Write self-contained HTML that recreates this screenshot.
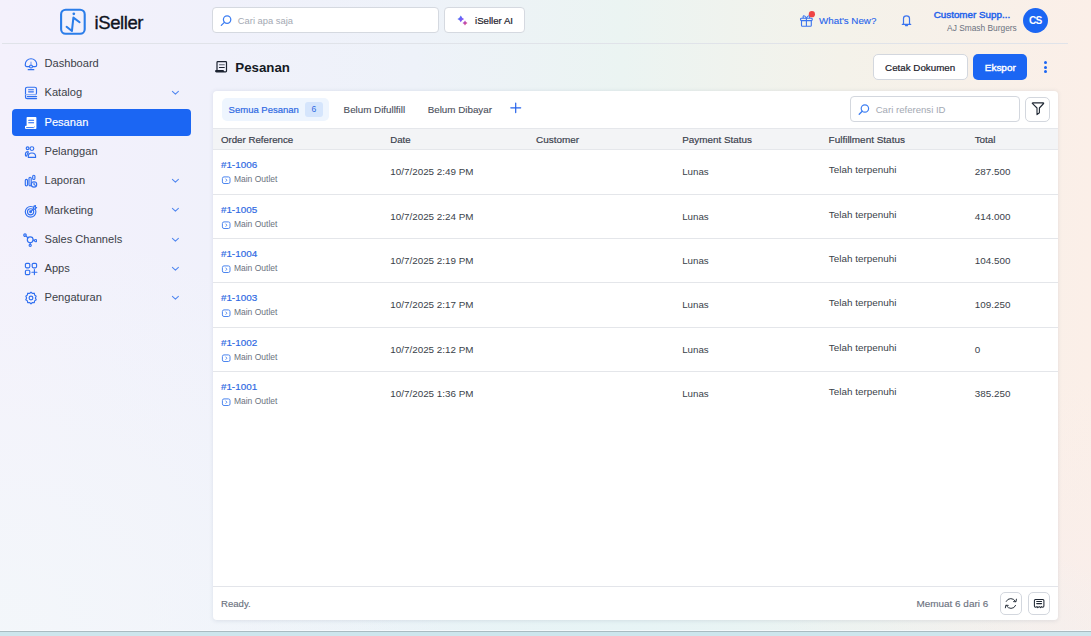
<!DOCTYPE html>
<html><head><meta charset="utf-8">
<style>
*{box-sizing:border-box;margin:0;padding:0}
html,body{width:1091px;height:636px;overflow:hidden}
body{font-family:"Liberation Sans",sans-serif;position:relative;
background:
radial-gradient(ellipse 460px 420px at 0px 636px, rgba(243,247,250,0.95) 0%, rgba(243,247,250,0.5) 50%, rgba(243,247,250,0) 100%),
radial-gradient(ellipse 520px 140px at 640px 636px, rgba(230,244,246,0.9) 0%, rgba(230,244,246,0) 100%),
radial-gradient(ellipse 320px 260px at 1091px 636px, rgba(249,238,235,0.9) 0%, rgba(249,238,235,0) 100%),
linear-gradient(90deg,#f4f1fc 0%,#f0f1fb 20%,#eef2f9 38%,#ebf4f2 57%,#f4f2ea 77%,#fbefe8 100%);}
.abs{position:absolute}
.t{position:absolute;white-space:nowrap}
</style></head><body>
<div class="abs" style="left:2px;top:43px;width:1066px;height:1px;background:#e0e3e9"></div>
<div class="abs" style="left:0;top:630px;width:1091px;height:1px;background:rgba(250,252,255,0.7)"></div>
<div class="abs" style="left:0;top:631px;width:1091px;height:1px;background:#a9bbc1"></div>
<div class="abs" style="left:0;top:632px;width:1091px;height:4px;background:#cde6ed"></div>
<svg class="abs" style="left:58px;top:7px" width="30" height="30" viewBox="58 7 30 30">
<rect x="61.1" y="9.7" width="23.6" height="24.1" rx="4.6" fill="none" stroke="#2b7de9" stroke-width="2.1"/>
<circle cx="73.8" cy="13.8" r="1.35" fill="#2b7de9"/>
<path d="M66.6 26.8 L71.9 31 L73.4 17.6 L79.6 22.2" fill="none" stroke="#2b7de9" stroke-width="2.05" stroke-linejoin="round" stroke-linecap="round"/>
</svg>
<div class="t" style="left:94.5px;top:14.16px;font-size:18.5px;line-height:18.5px;color:#10131f;font-weight:400;letter-spacing:-0.4px;-webkit-text-stroke:0.35px #10131f">iSeller</div>
<div class="abs" style="left:212px;top:7px;width:227px;height:26px;background:#fff;border:1px solid #d5d9e0;border-radius:4px"></div>
<svg class="abs" style="left:218px;top:13px" width="16" height="16" viewBox="218 13 16 16">
<circle cx="227.1" cy="19.6" r="3.7" fill="none" stroke="#3d7ef2" stroke-width="1.25"/>
<path d="M224.4 22.4 L221.3 25.4" stroke="#3d7ef2" stroke-width="1.3" stroke-linecap="round"/></svg>
<div class="t" style="left:237.8px;top:16.00px;font-size:9.4px;line-height:9.4px;color:#a4a9b3;font-weight:400;">Cari apa saja</div>
<div class="abs" style="left:444px;top:7px;width:81px;height:26px;background:#fff;border:1px solid #d5d9e0;border-radius:4px"></div>
<svg class="abs" style="left:454px;top:13px" width="14" height="13" viewBox="454 13 14 13">
<defs><linearGradient id="g1" gradientUnits="userSpaceOnUse" x1="457" y1="16" x2="467.5" y2="25"><stop offset="0" stop-color="#2d7ff6"/><stop offset="0.5" stop-color="#8a55f5"/><stop offset="1" stop-color="#f0466a"/></linearGradient></defs>
<path d="M460.8 15.50 Q461.75 17.95 464.20 18.9 Q461.75 19.85 460.8 22.30 Q459.85 19.85 457.40 18.9 Q459.85 17.95 460.8 15.50Z" fill="url(#g1)"/>
<path d="M465 20.40 Q465.70 22.20 467.50 22.9 Q465.70 23.60 465 25.40 Q464.30 23.60 462.50 22.9 Q464.30 22.20 465 20.40Z" fill="url(#g1)"/>
</svg>
<div class="t" style="left:475px;top:15.73px;font-size:9.65px;line-height:9.65px;color:#1d212b;font-weight:400;-webkit-text-stroke:0.2px #1d212b">iSeller AI</div>
<svg class="abs" style="left:798px;top:10px" width="18" height="18" viewBox="798 10 18 18">
<rect x="800.6" y="18.2" width="11.6" height="2.4" rx="0.8" fill="none" stroke="#3b74ee" stroke-width="1.1"/>
<path d="M801.5 20.6 V25.4 Q801.5 26.3 802.4 26.3 H810.4 Q811.3 26.3 811.3 25.4 V20.6 M806.4 18.2 V26.3" fill="none" stroke="#3b74ee" stroke-width="1.1"/>
<path d="M806.4 18.2 C804.6 14.6 802.4 15.2 803.3 18.2 M806.4 18.2 C808.2 14.6 810.4 15.2 809.5 18.2" fill="none" stroke="#3b74ee" stroke-width="1.1"/>
<circle cx="811.9" cy="14.2" r="3.1" fill="#ef4444"/>
</svg>
<div class="t" style="left:819.1px;top:16.06px;font-size:9.78px;line-height:9.78px;color:#2563eb;font-weight:400;-webkit-text-stroke:0.12px #2563eb">What's New?</div>
<svg class="abs" style="left:900px;top:13px" width="14" height="15" viewBox="900 13 14 15">
<path d="M903.5 24 V18.5 Q903.5 15.8 906.5 15.8 Q909.5 15.8 909.5 18.5 V24" fill="none" stroke="#3b74ee" stroke-width="1.2"/>
<path d="M902.3 24.3 H910.7" stroke="#3b74ee" stroke-width="1.3" stroke-linecap="round"/>
<path d="M905.4 25.6 H907.6" stroke="#3b74ee" stroke-width="1.1" stroke-linecap="round"/>
</svg>
<div class="t" style="left:933.7px;top:9.63px;font-size:9.84px;line-height:9.84px;color:#2563eb;font-weight:400;-webkit-text-stroke:0.45px #2563eb">Customer Supp...</div>
<div class="t" style="left:947.1px;top:23.67px;font-size:8.37px;line-height:8.37px;color:#6b7280;font-weight:400;">AJ Smash Burgers</div>
<div class="abs" style="left:1023px;top:8px;width:25px;height:25px;border-radius:50%;background:#1b66f3"></div>
<div class="t" style="left:1028.9px;top:16.25px;font-size:10.2px;line-height:10.2px;color:#fff;font-weight:700;letter-spacing:-0.8px">CS</div>
<div class="abs" style="left:12px;top:109px;width:179px;height:27px;border-radius:4px;background:#1b66f3"></div>
<div class="t" style="left:44.5px;top:58.29px;font-size:11.1px;line-height:11.1px;color:#3b3f48;font-weight:400;">Dashboard</div>
<div class="t" style="left:44.5px;top:86.89px;font-size:11.1px;line-height:11.1px;color:#3b3f48;font-weight:400;">Katalog</div>
<div class="t" style="left:44.5px;top:116.59px;font-size:11.1px;line-height:11.1px;color:#fff;font-weight:400;-webkit-text-stroke:0.15px #fff">Pesanan</div>
<div class="t" style="left:44.5px;top:146.49px;font-size:11.1px;line-height:11.1px;color:#3b3f48;font-weight:400;">Pelanggan</div>
<div class="t" style="left:44.5px;top:175.49px;font-size:11.1px;line-height:11.1px;color:#3b3f48;font-weight:400;">Laporan</div>
<div class="t" style="left:44.5px;top:205.29px;font-size:11.1px;line-height:11.1px;color:#3b3f48;font-weight:400;">Marketing</div>
<div class="t" style="left:44.5px;top:233.69px;font-size:11.1px;line-height:11.1px;color:#3b3f48;font-weight:400;">Sales Channels</div>
<div class="t" style="left:44.5px;top:263.49px;font-size:11.1px;line-height:11.1px;color:#3b3f48;font-weight:400;">Apps</div>
<div class="t" style="left:44.5px;top:292.29px;font-size:11.1px;line-height:11.1px;color:#3b3f48;font-weight:400;">Pengaturan</div>
<svg class="abs" style="left:170px;top:89.2px" width="11" height="8" viewBox="0 0 11 8"><path d="M2.4 2.3 L5.4 5.2 L8.4 2.3" fill="none" stroke="#4f86f0" stroke-width="1.05" stroke-linecap="round" stroke-linejoin="round"/></svg>
<svg class="abs" style="left:170px;top:177.0px" width="11" height="8" viewBox="0 0 11 8"><path d="M2.4 2.3 L5.4 5.2 L8.4 2.3" fill="none" stroke="#4f86f0" stroke-width="1.05" stroke-linecap="round" stroke-linejoin="round"/></svg>
<svg class="abs" style="left:170px;top:206.2px" width="11" height="8" viewBox="0 0 11 8"><path d="M2.4 2.3 L5.4 5.2 L8.4 2.3" fill="none" stroke="#4f86f0" stroke-width="1.05" stroke-linecap="round" stroke-linejoin="round"/></svg>
<svg class="abs" style="left:170px;top:235.8px" width="11" height="8" viewBox="0 0 11 8"><path d="M2.4 2.3 L5.4 5.2 L8.4 2.3" fill="none" stroke="#4f86f0" stroke-width="1.05" stroke-linecap="round" stroke-linejoin="round"/></svg>
<svg class="abs" style="left:170px;top:265.0px" width="11" height="8" viewBox="0 0 11 8"><path d="M2.4 2.3 L5.4 5.2 L8.4 2.3" fill="none" stroke="#4f86f0" stroke-width="1.05" stroke-linecap="round" stroke-linejoin="round"/></svg>
<svg class="abs" style="left:170px;top:293.8px" width="11" height="8" viewBox="0 0 11 8"><path d="M2.4 2.3 L5.4 5.2 L8.4 2.3" fill="none" stroke="#4f86f0" stroke-width="1.05" stroke-linecap="round" stroke-linejoin="round"/></svg>
<svg class="abs" style="left:24px;top:56.5px" width="14" height="14" viewBox="0 0 14 14" fill="none" stroke="#2f6ff0" stroke-width="1.15" stroke-linecap="round" stroke-linejoin="round"><path d="M5.4 9.6 H2.9 Q1.3 9.6 1.3 8 V7.2 A5.7 5.5 0 0 1 12.7 7.2 V8 Q12.7 9.6 11.1 9.6 H8.6"/><circle cx="7" cy="9.5" r="1.45"/><path d="M7 5 V7.8" stroke="#7ea3f4"/><path d="M4.2 12.7 H9.8" stroke-width="1.2"/></svg>
<svg class="abs" style="left:24px;top:86px" width="14" height="14" viewBox="0 0 14 14" fill="none" stroke="#2f6ff0" stroke-width="1.15" stroke-linecap="round" stroke-linejoin="round"><path d="M1.5 11 V3 Q1.5 1.2 3.3 1.2 H10.7 Q12.5 1.2 12.5 3 V7 Q12.5 8.2 11.5 8.6"/><path d="M1.5 11 Q1.5 12.6 3.1 12.6 H12.6"/><path d="M1.7 8.6 H11.6" stroke="#8fb0f5"/><path d="M3.3 10.6 H12.6"/><path d="M4.6 3.7 H9.4 M4.6 5.8 H9.4"/></svg>
<svg class="abs" style="left:24px;top:116px" width="14" height="14" viewBox="0 0 14 14"><path d="M2.6 1.8 Q2.6 1 3.4 1 H11.6 Q12.4 1 12.4 1.8 V12.2 Q12.4 13 11.6 13 H2.3 Q1 13 1 11.7 V10.6 Q1 9.7 1.9 9.7 H2.6 Z" fill="#fff"/><path d="M4.7 4.3 H9.6 M4.7 6.7 H9.6" stroke="#1b66f3" stroke-width="1.1" stroke-linecap="round"/><path d="M2.2 11.6 H9.6 L10.6 10.8" stroke="#1b66f3" stroke-width="0.9" fill="none"/></svg>
<svg class="abs" style="left:24px;top:144.9px" width="14" height="14" viewBox="0 0 14 14" fill="none" stroke="#2f6ff0" stroke-width="1.15" stroke-linecap="round" stroke-linejoin="round"><circle cx="3.6" cy="3.2" r="1.4"/><circle cx="7.9" cy="3.6" r="1.9"/><path d="M4.3 12.4 Q3.8 8 7.9 8 Q12 8 11.6 12.4 Z"/><path d="M4.2 6.6 Q1.2 6.6 1.4 10 Q1.6 11.8 2.7 10.8 Q3.3 8.6 4.4 7.8"/></svg>
<svg class="abs" style="left:24px;top:174px" width="14" height="14" viewBox="0 0 14 14" fill="none" stroke="#2f6ff0" stroke-width="1.15" stroke-linecap="round" stroke-linejoin="round"><rect x="1.3" y="5.3" width="2.2" height="6.6" rx="1.1"/><rect x="5" y="3.2" width="2.2" height="8.7" rx="1.1"/><rect x="8.7" y="1.2" width="2.2" height="4.3" rx="1.1"/><circle cx="10" cy="10.4" r="2.7" fill="#f0f1fb"/><path d="M10 8.8 V10.4 L11.3 11.4"/></svg>
<svg class="abs" style="left:24px;top:203.5px" width="14" height="14" viewBox="0 0 14 14" fill="none" stroke="#2f6ff0" stroke-width="1.15" stroke-linecap="round" stroke-linejoin="round"><circle cx="6.6" cy="7.8" r="5.3"/><circle cx="6.6" cy="7.8" r="3.1"/><path d="M6.6 7.8 L10.2 4.2"/><circle cx="6.6" cy="7.8" r="0.9" fill="#2f6ff0"/><path d="M10 2.1 L11.5 1.6 L11.3 3.2 L12.6 3.6 L10.6 5.2 L9.3 4.7 Z" fill="#f0f1fb"/></svg>
<svg class="abs" style="left:23px;top:233px" width="14" height="14" viewBox="0 0 14 14" fill="none" stroke="#2f6ff0" stroke-width="1.15" stroke-linecap="round" stroke-linejoin="round"><circle cx="7.2" cy="6.8" r="2.9"/><circle cx="2" cy="2.1" r="1.25"/><circle cx="12.6" cy="7.6" r="1.1"/><circle cx="7.2" cy="12.3" r="1.1"/><path d="M2.9 3 L5 4.9 M10.1 7.1 L11.5 7.4 M7.2 9.7 V11.2"/></svg>
<svg class="abs" style="left:24px;top:262px" width="14" height="14" viewBox="0 0 14 14" fill="none" stroke="#2f6ff0" stroke-width="1.15" stroke-linecap="round" stroke-linejoin="round"><rect x="1.4" y="1.4" width="4.4" height="4.4" rx="1.2"/><rect x="8.2" y="1.4" width="4.4" height="4.4" rx="1.2"/><rect x="1.4" y="8.2" width="4.4" height="4.4" rx="1.2"/><path d="M10.4 7.6 V12.6 M7.9 10.2 H12.9"/></svg>
<svg class="abs" style="left:24px;top:290.8px" width="14" height="14" viewBox="0 0 14 14" fill="none" stroke="#2f6ff0" stroke-width="1.15" stroke-linecap="round" stroke-linejoin="round"><path d="M7 1.2 L8.4 2.4 L10.3 2.2 L10.6 4 L12.2 5.1 L11.4 6.9 L12.2 8.7 L10.6 9.9 L10.3 11.7 L8.4 11.5 L7 12.8 L5.6 11.5 L3.7 11.7 L3.4 9.9 L1.8 8.7 L2.6 6.9 L1.8 5.1 L3.4 4 L3.7 2.2 L5.6 2.4 Z"/><circle cx="7" cy="7" r="1.9"/></svg>
<svg class="abs" style="left:208px;top:56px" width="24" height="22" viewBox="208 56 24 22"><path d="M217 70.6 V62.4 Q217 61.6 217.8 61.6 H225.7 Q226.5 61.6 226.5 62.4 V71 Q226.5 71.8 225.7 71.8 H216.4 Q215.6 71.8 215.6 71.1 Q215.6 70.5 216.3 70.5 H222.9 L223.9 71.6" fill="none" stroke="#1b2230" stroke-width="1.2" stroke-linejoin="round"/><path d="M216 71.2 H223" stroke="#1b2230" stroke-width="1.5"/><path d="M219.4 64.8 H224.3" stroke="#5b6270" stroke-width="1.05" stroke-linecap="round"/><path d="M219.4 67.4 H224.3" stroke="#1b2230" stroke-width="1.05" stroke-linecap="round"/></svg>
<div class="t" style="left:235.3px;top:60.58px;font-size:13.3px;line-height:13.3px;color:#151a24;font-weight:700;">Pesanan</div>
<div class="abs" style="left:873px;top:54px;width:95px;height:26px;background:#fff;border:1px solid #d3d7de;border-radius:5px"></div>
<div class="t" style="left:885.1px;top:62.76px;font-size:9.79px;line-height:9.79px;color:#1d212b;font-weight:400;-webkit-text-stroke:0.2px #1d212b">Cetak Dokumen</div>
<div class="abs" style="left:973px;top:54px;width:54px;height:26px;background:#1b66f3;border-radius:5px"></div>
<div class="t" style="left:984.8px;top:63.28px;font-size:9.95px;line-height:9.95px;color:#fff;font-weight:400;-webkit-text-stroke:0.4px #fff">Ekspor</div>
<div class="abs" style="left:1043.5px;top:61.0px;width:3px;height:3px;border-radius:50%;background:#1b66f3"></div>
<div class="abs" style="left:1043.5px;top:65.5px;width:3px;height:3px;border-radius:50%;background:#1b66f3"></div>
<div class="abs" style="left:1043.5px;top:70.0px;width:3px;height:3px;border-radius:50%;background:#1b66f3"></div>
<div class="abs" style="left:213px;top:91px;width:845px;height:529px;background:#fff;border-radius:4px;box-shadow:0 0.5px 4px rgba(60,70,110,0.12)"></div>
<div class="abs" style="left:222px;top:98px;width:107px;height:23px;background:#eef5fe;border-radius:5px"></div>
<div class="abs" style="left:305px;top:102px;width:18px;height:15px;background:#d5e5fc;border-radius:3px"></div>
<div class="t" style="left:228.6px;top:104.80px;font-size:9.5px;line-height:9.5px;color:#2f6ae3;font-weight:400;-webkit-text-stroke:0.2px #2f6ae3">Semua Pesanan</div>
<div class="t" style="left:311.6px;top:104.96px;font-size:8.6px;line-height:8.6px;color:#2f6ae3;font-weight:400;">6</div>
<div class="t" style="left:343.6px;top:104.75px;font-size:9.8px;line-height:9.8px;color:#4b505b;font-weight:400;-webkit-text-stroke:0.12px #4b505b">Belum Difullfill</div>
<div class="t" style="left:427.7px;top:104.75px;font-size:9.8px;line-height:9.8px;color:#4b505b;font-weight:400;-webkit-text-stroke:0.12px #4b505b">Belum Dibayar</div>
<svg class="abs" style="left:509px;top:101px" width="13" height="13" viewBox="509 101 13 13"><path d="M515.7 103 V112.6 M510.8 107.8 H520.7" stroke="#2563eb" stroke-width="1.2" stroke-linecap="round"/></svg>
<div class="abs" style="left:850px;top:96px;width:170px;height:26px;background:#fff;border:1px solid #d3d7de;border-radius:4px"></div>
<svg class="abs" style="left:857px;top:102px" width="14" height="14" viewBox="857 102 14 14">
<circle cx="864.9" cy="108.5" r="3.7" fill="none" stroke="#3d7ef2" stroke-width="1.2"/>
<path d="M862.2 111.3 L859.2 114.3" stroke="#3d7ef2" stroke-width="1.3" stroke-linecap="round"/></svg>
<div class="t" style="left:875.7px;top:104.55px;font-size:9.6px;line-height:9.6px;color:#a4a9b3;font-weight:400;">Cari referensi ID</div>
<div class="abs" style="left:1025px;top:97px;width:25px;height:25px;background:#fff;border:1px solid #d3d7de;border-radius:5px"></div>
<svg class="abs" style="left:1030px;top:101px" width="16" height="16" viewBox="1030 101 16 16"><path d="M1032.3 103.4 Q1032 102.9 1032.8 102.9 H1043.2 Q1044 102.9 1043.6 103.5 L1039.4 108 V112.8 L1037 114.6 V108 Z" fill="none" stroke="#1f2733" stroke-width="1.1" stroke-linejoin="round"/></svg>
<div class="abs" style="left:213px;top:128px;width:845px;height:22px;background:#f3f4f6;border-top:1px solid #e5e7eb;border-bottom:1px solid #e5e7eb"></div>
<div class="t" style="left:220.9px;top:134.99px;font-size:9.72px;line-height:9.72px;color:#3a404c;font-weight:400;-webkit-text-stroke:0.18px #3a404c">Order Reference</div>
<div class="t" style="left:390.3px;top:135.05px;font-size:9.6px;line-height:9.6px;color:#3a404c;font-weight:400;-webkit-text-stroke:0.18px #3a404c">Date</div>
<div class="t" style="left:536px;top:134.88px;font-size:9.95px;line-height:9.95px;color:#3a404c;font-weight:400;-webkit-text-stroke:0.18px #3a404c">Customer</div>
<div class="t" style="left:682.2px;top:134.90px;font-size:9.9px;line-height:9.9px;color:#3a404c;font-weight:400;-webkit-text-stroke:0.18px #3a404c">Payment Status</div>
<div class="t" style="left:828.6px;top:134.87px;font-size:9.96px;line-height:9.96px;color:#3a404c;font-weight:400;-webkit-text-stroke:0.18px #3a404c">Fulfillment Status</div>
<div class="t" style="left:974.7px;top:134.90px;font-size:9.9px;line-height:9.9px;color:#3a404c;font-weight:400;-webkit-text-stroke:0.18px #3a404c">Total</div>
<div class="abs" style="left:213px;top:194px;width:845px;height:1px;background:#e4e6ea"></div>
<div class="abs" style="left:213px;top:238px;width:845px;height:1px;background:#e4e6ea"></div>
<div class="abs" style="left:213px;top:282px;width:845px;height:1px;background:#e4e6ea"></div>
<div class="abs" style="left:213px;top:327px;width:845px;height:1px;background:#e4e6ea"></div>
<div class="abs" style="left:213px;top:371px;width:845px;height:1px;background:#e4e6ea"></div>
<div class="t" style="left:220.9px;top:159.60px;font-size:9.9px;line-height:9.9px;color:#2f6ae3;font-weight:400;-webkit-text-stroke:0.2px #2f6ae3">#1-1006</div>
<svg class="abs" style="left:221px;top:175.60px" width="11" height="9" viewBox="0 0 11 9"><rect x="1.4" y="0.9" width="7.6" height="6.6" rx="1.6" fill="none" stroke="#4d86ef" stroke-width="1"/><path d="M4.6 2.7 L5.9 4.2 L4.6 5.7" fill="none" stroke="#4d86ef" stroke-width="0.9"/></svg>
<div class="t" style="left:233.9px;top:175.31px;font-size:8.5px;line-height:8.5px;color:#6b7280;font-weight:400;">Main Outlet</div>
<div class="t" style="left:390.3px;top:166.62px;font-size:9.86px;line-height:9.86px;color:#3a3f4a;font-weight:400;">10/7/2025 2:49 PM</div>
<div class="t" style="left:682.2px;top:166.63px;font-size:9.74px;line-height:9.74px;color:#3a3f4a;font-weight:400;">Lunas</div>
<div class="t" style="left:828.8px;top:165.40px;font-size:9.9px;line-height:9.9px;color:#3a3f4a;font-weight:400;">Telah terpenuhi</div>
<div class="t" style="left:974.8px;top:167.02px;font-size:9.86px;line-height:9.86px;color:#3a3f4a;font-weight:400;">287.500</div>
<div class="t" style="left:220.9px;top:204.60px;font-size:9.9px;line-height:9.9px;color:#2f6ae3;font-weight:400;-webkit-text-stroke:0.2px #2f6ae3">#1-1005</div>
<svg class="abs" style="left:221px;top:220.60px" width="11" height="9" viewBox="0 0 11 9"><rect x="1.4" y="0.9" width="7.6" height="6.6" rx="1.6" fill="none" stroke="#4d86ef" stroke-width="1"/><path d="M4.6 2.7 L5.9 4.2 L4.6 5.7" fill="none" stroke="#4d86ef" stroke-width="0.9"/></svg>
<div class="t" style="left:233.9px;top:220.31px;font-size:8.5px;line-height:8.5px;color:#6b7280;font-weight:400;">Main Outlet</div>
<div class="t" style="left:390.3px;top:211.62px;font-size:9.86px;line-height:9.86px;color:#3a3f4a;font-weight:400;">10/7/2025 2:24 PM</div>
<div class="t" style="left:682.2px;top:211.63px;font-size:9.74px;line-height:9.74px;color:#3a3f4a;font-weight:400;">Lunas</div>
<div class="t" style="left:828.8px;top:210.40px;font-size:9.9px;line-height:9.9px;color:#3a3f4a;font-weight:400;">Telah terpenuhi</div>
<div class="t" style="left:974.8px;top:212.02px;font-size:9.86px;line-height:9.86px;color:#3a3f4a;font-weight:400;">414.000</div>
<div class="t" style="left:220.9px;top:248.60px;font-size:9.9px;line-height:9.9px;color:#2f6ae3;font-weight:400;-webkit-text-stroke:0.2px #2f6ae3">#1-1004</div>
<svg class="abs" style="left:221px;top:264.60px" width="11" height="9" viewBox="0 0 11 9"><rect x="1.4" y="0.9" width="7.6" height="6.6" rx="1.6" fill="none" stroke="#4d86ef" stroke-width="1"/><path d="M4.6 2.7 L5.9 4.2 L4.6 5.7" fill="none" stroke="#4d86ef" stroke-width="0.9"/></svg>
<div class="t" style="left:233.9px;top:264.31px;font-size:8.5px;line-height:8.5px;color:#6b7280;font-weight:400;">Main Outlet</div>
<div class="t" style="left:390.3px;top:255.62px;font-size:9.86px;line-height:9.86px;color:#3a3f4a;font-weight:400;">10/7/2025 2:19 PM</div>
<div class="t" style="left:682.2px;top:255.63px;font-size:9.74px;line-height:9.74px;color:#3a3f4a;font-weight:400;">Lunas</div>
<div class="t" style="left:828.8px;top:254.40px;font-size:9.9px;line-height:9.9px;color:#3a3f4a;font-weight:400;">Telah terpenuhi</div>
<div class="t" style="left:974.8px;top:256.02px;font-size:9.86px;line-height:9.86px;color:#3a3f4a;font-weight:400;">104.500</div>
<div class="t" style="left:220.9px;top:292.60px;font-size:9.9px;line-height:9.9px;color:#2f6ae3;font-weight:400;-webkit-text-stroke:0.2px #2f6ae3">#1-1003</div>
<svg class="abs" style="left:221px;top:308.60px" width="11" height="9" viewBox="0 0 11 9"><rect x="1.4" y="0.9" width="7.6" height="6.6" rx="1.6" fill="none" stroke="#4d86ef" stroke-width="1"/><path d="M4.6 2.7 L5.9 4.2 L4.6 5.7" fill="none" stroke="#4d86ef" stroke-width="0.9"/></svg>
<div class="t" style="left:233.9px;top:308.31px;font-size:8.5px;line-height:8.5px;color:#6b7280;font-weight:400;">Main Outlet</div>
<div class="t" style="left:390.3px;top:299.62px;font-size:9.86px;line-height:9.86px;color:#3a3f4a;font-weight:400;">10/7/2025 2:17 PM</div>
<div class="t" style="left:682.2px;top:299.63px;font-size:9.74px;line-height:9.74px;color:#3a3f4a;font-weight:400;">Lunas</div>
<div class="t" style="left:828.8px;top:298.40px;font-size:9.9px;line-height:9.9px;color:#3a3f4a;font-weight:400;">Telah terpenuhi</div>
<div class="t" style="left:974.8px;top:300.02px;font-size:9.86px;line-height:9.86px;color:#3a3f4a;font-weight:400;">109.250</div>
<div class="t" style="left:220.9px;top:337.60px;font-size:9.9px;line-height:9.9px;color:#2f6ae3;font-weight:400;-webkit-text-stroke:0.2px #2f6ae3">#1-1002</div>
<svg class="abs" style="left:221px;top:353.60px" width="11" height="9" viewBox="0 0 11 9"><rect x="1.4" y="0.9" width="7.6" height="6.6" rx="1.6" fill="none" stroke="#4d86ef" stroke-width="1"/><path d="M4.6 2.7 L5.9 4.2 L4.6 5.7" fill="none" stroke="#4d86ef" stroke-width="0.9"/></svg>
<div class="t" style="left:233.9px;top:353.31px;font-size:8.5px;line-height:8.5px;color:#6b7280;font-weight:400;">Main Outlet</div>
<div class="t" style="left:390.3px;top:344.62px;font-size:9.86px;line-height:9.86px;color:#3a3f4a;font-weight:400;">10/7/2025 2:12 PM</div>
<div class="t" style="left:682.2px;top:344.63px;font-size:9.74px;line-height:9.74px;color:#3a3f4a;font-weight:400;">Lunas</div>
<div class="t" style="left:828.8px;top:343.40px;font-size:9.9px;line-height:9.9px;color:#3a3f4a;font-weight:400;">Telah terpenuhi</div>
<div class="t" style="left:974.8px;top:345.02px;font-size:9.86px;line-height:9.86px;color:#3a3f4a;font-weight:400;">0</div>
<div class="t" style="left:220.9px;top:381.60px;font-size:9.9px;line-height:9.9px;color:#2f6ae3;font-weight:400;-webkit-text-stroke:0.2px #2f6ae3">#1-1001</div>
<svg class="abs" style="left:221px;top:397.60px" width="11" height="9" viewBox="0 0 11 9"><rect x="1.4" y="0.9" width="7.6" height="6.6" rx="1.6" fill="none" stroke="#4d86ef" stroke-width="1"/><path d="M4.6 2.7 L5.9 4.2 L4.6 5.7" fill="none" stroke="#4d86ef" stroke-width="0.9"/></svg>
<div class="t" style="left:233.9px;top:397.31px;font-size:8.5px;line-height:8.5px;color:#6b7280;font-weight:400;">Main Outlet</div>
<div class="t" style="left:390.3px;top:388.62px;font-size:9.86px;line-height:9.86px;color:#3a3f4a;font-weight:400;">10/7/2025 1:36 PM</div>
<div class="t" style="left:682.2px;top:388.63px;font-size:9.74px;line-height:9.74px;color:#3a3f4a;font-weight:400;">Lunas</div>
<div class="t" style="left:828.8px;top:387.40px;font-size:9.9px;line-height:9.9px;color:#3a3f4a;font-weight:400;">Telah terpenuhi</div>
<div class="t" style="left:974.8px;top:389.02px;font-size:9.86px;line-height:9.86px;color:#3a3f4a;font-weight:400;">385.250</div>
<div class="abs" style="left:213px;top:586px;width:845px;height:1px;background:#e3e5ea"></div>
<div class="t" style="left:221px;top:598.60px;font-size:9.6px;line-height:9.6px;color:#6b7280;font-weight:400;-webkit-text-stroke:0.15px #6b7280">Ready.</div>
<div class="t" style="left:916.5px;top:598.78px;font-size:9.94px;line-height:9.94px;color:#6b7280;font-weight:400;-webkit-text-stroke:0.15px #6b7280">Memuat 6 dari 6</div>
<div class="abs" style="left:1000px;top:592px;width:22px;height:23px;background:#fff;border:1px solid #d3d7de;border-radius:5px"></div>
<div class="abs" style="left:1028px;top:592px;width:22px;height:23px;background:#fff;border:1px solid #d3d7de;border-radius:5px"></div>
<svg class="abs" style="left:1003px;top:596px" width="16" height="15" viewBox="1003 596 16 15">
<path d="M1006.2 601.4 Q1007.5 598.6 1010.8 598.6 Q1013.6 598.6 1015.4 601.2" fill="none" stroke="#1f2733" stroke-width="0.95" stroke-linecap="round"/>
<path d="M1016.4 599.2 L1016 601.8 L1013.6 601.6" fill="none" stroke="#1f2733" stroke-width="0.95" stroke-linecap="round" stroke-linejoin="round"/>
<path d="M1015.6 605.4 Q1014.4 608.4 1011 608.4 Q1008.2 608.4 1006.4 605.8" fill="none" stroke="#1f2733" stroke-width="0.95" stroke-linecap="round"/>
<path d="M1005.4 607.8 L1005.8 605.2 L1008.2 605.4" fill="none" stroke="#1f2733" stroke-width="0.95" stroke-linecap="round" stroke-linejoin="round"/>
</svg>
<svg class="abs" style="left:1032px;top:597px" width="14" height="13" viewBox="1032 597 14 13">
<path d="M1035.6 607.2 Q1034.4 607.2 1034.4 606 V600.4 Q1034.4 599.4 1035.4 599.4 H1042.9 Q1043.9 599.4 1043.9 600.4 V606 Q1043.9 607.2 1042.7 607.2 Q1041.9 607.2 1041.4 606.6 L1040.6 607.6 L1039.2 606.6 L1037.8 607.6 L1037 606.6 Q1036.4 607.2 1035.6 607.2 Z" fill="none" stroke="#1f2733" stroke-width="1.05" stroke-linejoin="round"/>
<path d="M1036.7 601.5 H1041.6 M1036.7 603.6 H1041.6" stroke="#1f2733" stroke-width="1.05" stroke-linecap="round"/>
</svg>
</body></html>
